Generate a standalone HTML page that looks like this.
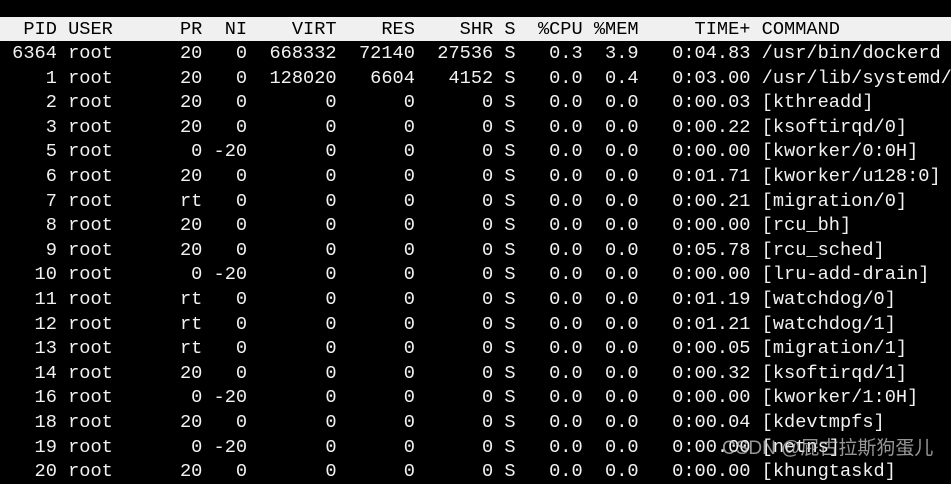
<!DOCTYPE html>
<html><head><meta charset="utf-8"><style>
html,body{margin:0;padding:0;background:#000;width:951px;height:466px;overflow:hidden}
pre{margin:0;position:absolute;left:1px;top:16.5px;font-family:"Liberation Mono",monospace;font-size:18.65px;line-height:24.6px;color:#f2f2f2;white-space:pre}
.h{background:#f0f0f0;color:#000;display:block;width:951px;margin-left:-1px;padding-left:1px}
.wm{position:absolute;left:722px;top:433px;font-family:"Liberation Sans","Noto Sans CJK SC",sans-serif;font-size:19px;color:rgba(200,200,200,0.75);white-space:nowrap}
</style></head><body>
<pre><span class="h">  PID USER      PR  NI    VIRT    RES    SHR S  %CPU %MEM     TIME+ COMMAND</span> 6364 root      20   0  668332  72140  27536 S   0.3  3.9   0:04.83 /usr/bin/dockerd
    1 root      20   0  128020   6604   4152 S   0.0  0.4   0:03.00 /usr/lib/systemd/
    2 root      20   0       0      0      0 S   0.0  0.0   0:00.03 [kthreadd]
    3 root      20   0       0      0      0 S   0.0  0.0   0:00.22 [ksoftirqd/0]
    5 root       0 -20       0      0      0 S   0.0  0.0   0:00.00 [kworker/0:0H]
    6 root      20   0       0      0      0 S   0.0  0.0   0:01.71 [kworker/u128:0]
    7 root      rt   0       0      0      0 S   0.0  0.0   0:00.21 [migration/0]
    8 root      20   0       0      0      0 S   0.0  0.0   0:00.00 [rcu_bh]
    9 root      20   0       0      0      0 S   0.0  0.0   0:05.78 [rcu_sched]
   10 root       0 -20       0      0      0 S   0.0  0.0   0:00.00 [lru-add-drain]
   11 root      rt   0       0      0      0 S   0.0  0.0   0:01.19 [watchdog/0]
   12 root      rt   0       0      0      0 S   0.0  0.0   0:01.21 [watchdog/1]
   13 root      rt   0       0      0      0 S   0.0  0.0   0:00.05 [migration/1]
   14 root      20   0       0      0      0 S   0.0  0.0   0:00.32 [ksoftirqd/1]
   16 root       0 -20       0      0      0 S   0.0  0.0   0:00.00 [kworker/1:0H]
   18 root      20   0       0      0      0 S   0.0  0.0   0:00.04 [kdevtmpfs]
   19 root       0 -20       0      0      0 S   0.0  0.0   0:00.00 [netns]
   20 root      20   0       0      0      0 S   0.0  0.0   0:00.00 [khungtaskd]
</pre>
<div class="wm">CSDN @屁古拉斯狗蛋儿</div>
</body></html>
